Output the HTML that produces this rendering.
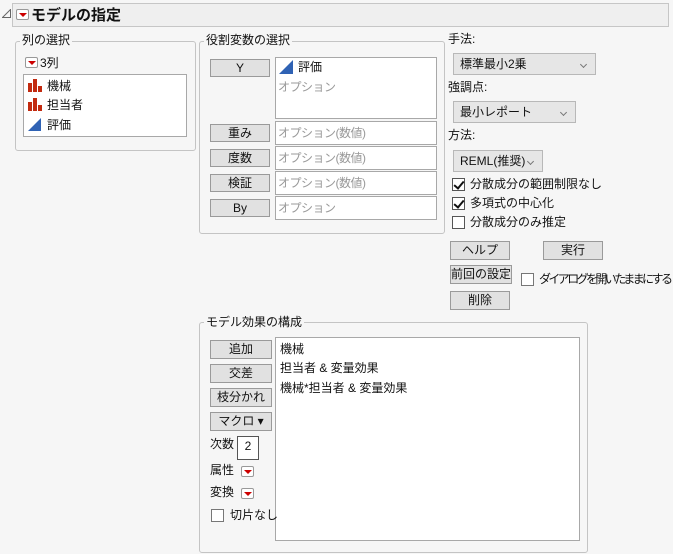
<!DOCTYPE html>
<html><head><meta charset="utf-8"><style>
*{box-sizing:border-box;margin:0;padding:0}
body{width:673px;height:554px;background:#f6f6f6;font-family:"Liberation Sans","Noto Sans CJK JP",sans-serif;font-size:12px;color:#111;position:relative;overflow:hidden}
.a{position:absolute}
.grp{position:absolute;border:1px solid #c4c4c4;border-radius:3px}
.lbl{position:absolute;background:#f6f6f6;padding:0 2px;font-size:12px;line-height:14px}
.btn{position:absolute;background:#e1e1e1;border:1px solid #9a9a9a;text-align:center;font-size:12px;line-height:16px}
.box{position:absolute;background:#fff;border:1px solid #a8a8a8}
.opt{color:#999;font-size:12px;letter-spacing:-0.5px}
.dd{position:absolute;background:#e6e6e6;border:1px solid #b8b8b8;font-size:12px;line-height:20px;padding-left:6px}
.dd:after{content:"";position:absolute;right:9px;top:8px;width:4px;height:4px;border-right:1px solid #777;border-bottom:1px solid #777;transform:rotate(45deg)}
.cb{position:absolute;width:13px;height:13px;background:#fff;border:1px solid #555}
.chk:after{content:"";position:absolute;left:3px;top:0px;width:4px;height:8px;border-right:2px solid #111;border-bottom:2px solid #111;transform:rotate(40deg)}
.rd{position:absolute;width:13px;height:11px;background:#fff;border:1px solid #999;border-radius:2px}
.rd:after{content:"";position:absolute;left:2px;top:3px;border-left:4px solid transparent;border-right:4px solid transparent;border-top:4px solid #c00}
.t{position:absolute;white-space:nowrap;line-height:14px}
</style></head><body>
<svg class="a" style="left:2px;top:9px" width="9" height="9"><path d="M0.5 8.5 L8.5 0.5 L8.5 8.5 Z" fill="none" stroke="#666" stroke-width="1"/></svg>
<div class="a" style="left:12px;top:3px;width:657px;height:24px;background:#efefef;border:1px solid #c6c6c6"></div>
<div class="rd" style="left:16px;top:9px"></div>
<div class="t" style="left:31px;top:7px;font-weight:bold;font-size:15px;line-height:17px">モデルの指定</div>

<div class="grp" style="left:15px;top:41px;width:181px;height:110px"></div>
<div class="lbl" style="left:20px;top:33px">列の選択</div>
<div class="rd" style="left:25px;top:57px"></div>
<div class="t" style="left:40px;top:56px">3列</div>
<div class="box" style="left:23px;top:74px;width:164px;height:63px"></div>
<svg class="a" style="left:28px;top:79px" width="14" height="14"><rect x="0" y="4" width="4" height="9" fill="#c22a10"/><rect x="5" y="0" width="4" height="13" fill="#c22a10"/><rect x="10" y="7" width="4" height="6" fill="#c22a10"/></svg>
<div class="t" style="left:47px;top:79px">機械</div>
<svg class="a" style="left:28px;top:98px" width="14" height="14"><rect x="0" y="4" width="4" height="9" fill="#c22a10"/><rect x="5" y="0" width="4" height="13" fill="#c22a10"/><rect x="10" y="7" width="4" height="6" fill="#c22a10"/></svg>
<div class="t" style="left:47px;top:98px">担当者</div>
<svg class="a" style="left:28px;top:118px" width="14" height="14"><path d="M0 13 L13 0 L13 13 Z" fill="#2f62b4"/></svg>
<div class="t" style="left:47px;top:118px">評価</div>

<div class="grp" style="left:199px;top:41px;width:246px;height:193px"></div>
<div class="lbl" style="left:204px;top:33px">役割変数の選択</div>
<div class="btn" style="left:210px;top:59px;width:60px;height:18px">Y</div>
<div class="box" style="left:275px;top:57px;width:162px;height:62px"></div>
<svg class="a" style="left:279px;top:60px" width="15" height="15"><path d="M0 14 L14 0 L14 14 Z" fill="#2f62b4"/></svg>
<div class="t" style="left:298px;top:60px">評価</div>
<div class="t opt" style="left:278px;top:80px">オプション</div>
<div class="btn" style="left:210px;top:124px;width:60px;height:18px">重み</div>
<div class="box" style="left:275px;top:121px;width:162px;height:24px"></div>
<div class="t opt" style="left:278px;top:126px">オプション(数値)</div>
<div class="btn" style="left:210px;top:149px;width:60px;height:18px">度数</div>
<div class="box" style="left:275px;top:146px;width:162px;height:24px"></div>
<div class="t opt" style="left:278px;top:151px">オプション(数値)</div>
<div class="btn" style="left:210px;top:174px;width:60px;height:18px">検証</div>
<div class="box" style="left:275px;top:171px;width:162px;height:24px"></div>
<div class="t opt" style="left:278px;top:176px">オプション(数値)</div>
<div class="btn" style="left:210px;top:199px;width:60px;height:18px">By</div>
<div class="box" style="left:275px;top:196px;width:162px;height:24px"></div>
<div class="t opt" style="left:278px;top:201px">オプション</div>

<div class="t" style="left:448px;top:32px">手法:</div>
<div class="dd" style="left:453px;top:53px;width:143px;height:22px">標準最小2乗</div>
<div class="t" style="left:448px;top:80px">強調点:</div>
<div class="dd" style="left:453px;top:101px;width:123px;height:22px">最小レポート</div>
<div class="t" style="left:448px;top:128px">方法:</div>
<div class="dd" style="left:453px;top:150px;width:90px;height:22px">REML(推奨)</div>
<div class="cb chk" style="left:452px;top:178px"></div>
<div class="t" style="left:470px;top:177px">分散成分の範囲制限なし</div>
<div class="cb chk" style="left:452px;top:197px"></div>
<div class="t" style="left:470px;top:196px">多項式の中心化</div>
<div class="cb" style="left:452px;top:216px"></div>
<div class="t" style="left:470px;top:215px">分散成分のみ推定</div>
<div class="btn" style="left:450px;top:241px;width:60px;height:19px">ヘルプ</div>
<div class="btn" style="left:543px;top:241px;width:60px;height:19px">実行</div>
<div class="btn" style="left:450px;top:265px;width:62px;height:19px">前回の設定</div>
<div class="cb" style="left:521px;top:273px;border-color:#777"></div>
<div class="t" style="left:539px;top:272px;letter-spacing:-2.6px">ダイアログを開いたままにする</div>
<div class="btn" style="left:450px;top:291px;width:60px;height:19px">削除</div>

<div class="grp" style="left:199px;top:322px;width:389px;height:231px"></div>
<div class="lbl" style="left:204px;top:315px">モデル効果の構成</div>
<div class="btn" style="left:210px;top:340px;width:62px;height:19px">追加</div>
<div class="btn" style="left:210px;top:364px;width:62px;height:19px">交差</div>
<div class="btn" style="left:210px;top:388px;width:62px;height:19px">枝分かれ</div>
<div class="btn" style="left:210px;top:412px;width:62px;height:19px">マクロ ▾</div>
<div class="box" style="left:275px;top:337px;width:305px;height:204px"></div>
<div class="t" style="left:280px;top:342px">機械</div>
<div class="t" style="left:280px;top:361px">担当者 &amp; 変量効果</div>
<div class="t" style="left:280px;top:381px">機械*担当者 &amp; 変量効果</div>
<div class="t" style="left:210px;top:437px">次数</div>
<div class="box" style="left:237px;top:436px;width:22px;height:24px;border-color:#555;text-align:center;line-height:18px">2</div>
<div class="t" style="left:210px;top:463px">属性</div>
<div class="rd" style="left:241px;top:466px"></div>
<div class="t" style="left:210px;top:485px">変換</div>
<div class="rd" style="left:241px;top:488px"></div>
<div class="cb" style="left:211px;top:509px;border-color:#777"></div>
<div class="t" style="left:230px;top:508px">切片なし</div>
</body></html>
